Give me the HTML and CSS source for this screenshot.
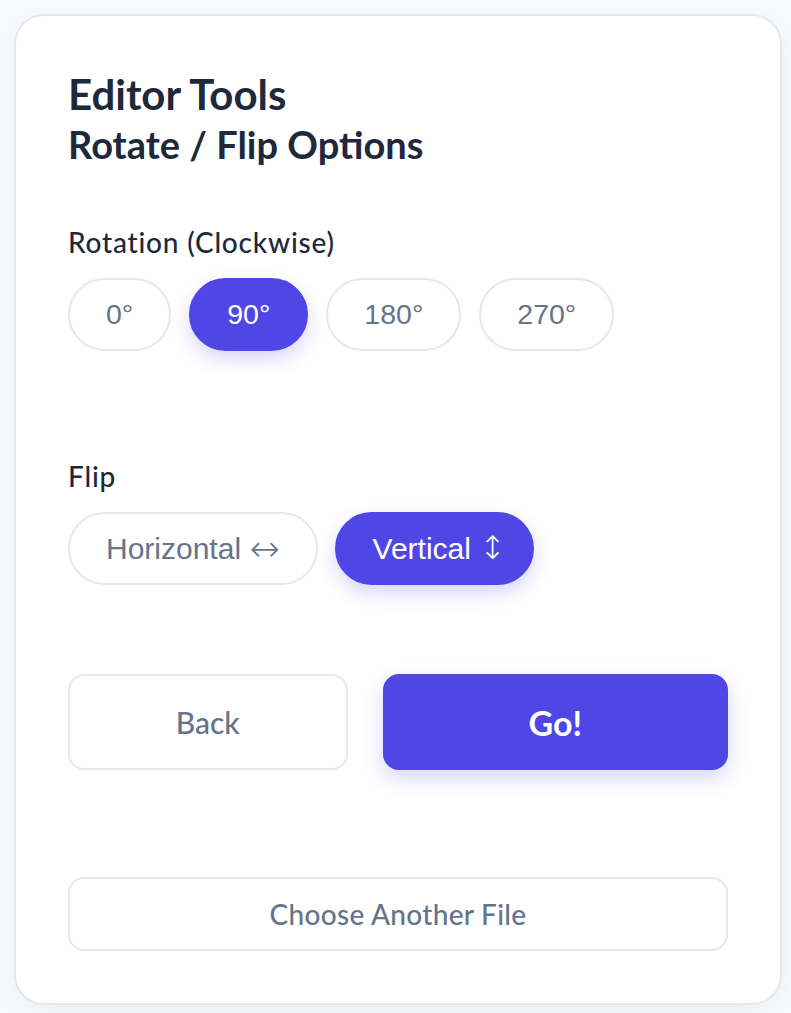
FILE: index.html
```html
<!DOCTYPE html>
<html>
<head>
<meta charset="utf-8">
<link rel="stylesheet" href="styles.css">
</head>
<body>
<div class="page">
  <div class="card">
    <h1 class="title">Editor Tools</h1>
    <h2 class="subtitle">Rotate / Flip Options</h2>

    <div class="section rotation">
      <div class="label">Rotation (Clockwise)</div>
      <div class="pills">
        <button class="pill">0°</button>
        <button class="pill active">90°</button>
        <button class="pill">180°</button>
        <button class="pill">270°</button>
      </div>
    </div>

    <div class="section flip">
      <div class="label">Flip</div>
      <div class="pills">
        <button class="pill wide">Horizontal <span class="arrow arrow-h">↔</span></button>
        <button class="pill wide active">Vertical <span class="arrow arrow-v">↕</span></button>
      </div>
    </div>

    <div class="actions">
      <button class="btn back">Back</button>
      <button class="btn go">Go!</button>
    </div>

    <button class="btn choose">Choose Another File</button>
  </div>
</div>
</body>
</html>
```

FILE: styles.css
```css
* { box-sizing: border-box; }
html, body { margin: 0; padding: 0; }
body {
  background: #f7f9fb;
  font-family: "Lato", "Noto Sans", sans-serif;
  color: #1e293b;
}
.page {
  padding: 14px 9px 8px 14px;
}
.card {
  background: #ffffff;
  border: 2px solid #e2e8f0;
  border-radius: 30px;
  box-shadow: 0 8px 24px rgba(15, 23, 42, 0.04);
  padding: 53px 52px 52px 52px;
  height: 991px;
  display: flex;
  flex-direction: column;
}
.title {
  margin: 0;
  font-size: 42px;
  font-weight: 700;
  line-height: 50px;
  color: #1e293b;
}
.subtitle {
  margin: 0;
  font-size: 38px;
  font-weight: 700;
  line-height: 51px;
  color: #1e293b;
}
.section { display: flex; flex-direction: column; }
.rotation { margin-top: 56px; }
.flip { margin-top: 109px; }
.label {
  font-size: 28px;
  font-weight: 500;
  letter-spacing: 0.8px;
  line-height: 32px;
  color: #1e293b;
  margin-bottom: 20px;
}
.pills {
  display: flex;
  gap: 17px;
  align-items: center;
}
.rotation .pills { gap: 18px; }
.pill {
  font-family: "Liberation Sans", Arial, sans-serif;
  font-size: 28.5px;
  line-height: 33px;
  height: 73px;
  padding: 0 36px;
  border: 2px solid #e2e8f0;
  border-radius: 999px;
  background: #ffffff;
  color: #64748b;
  cursor: pointer;
  display: inline-flex;
  align-items: center;
  white-space: pre;
}
.pill.wide {
  font-size: 30px;
}
.pill.active {
  background: #4f46e5;
  border-color: #4f46e5;
  color: #ffffff;
  box-shadow: 0 8px 18px rgba(79, 70, 229, 0.22);
}
.arrow {
  font-family: "DejaVu Sans", sans-serif;
  font-weight: 200;
  line-height: 33px;
}
.arrow-h { font-size: 36px; }
.arrow-v { font-size: 32px; margin-right: -10px; }
.actions {
  display: flex;
  gap: 35px;
  margin-top: 89px;
}
.btn {
  font-family: "Lato", "Noto Sans", sans-serif;
  border-radius: 16px;
  cursor: pointer;
}
.back {
  flex: 1;
  height: 96px;
  background: #ffffff;
  border: 2px solid #e2e8f0;
  color: #64748b;
  font-size: 30px;
  font-weight: 500;
}
.go {
  flex: 1.25;
  height: 96px;
  background: #4f46e5;
  border: 2px solid #4f46e5;
  color: #ffffff;
  font-size: 34px;
  font-weight: 700;
  box-shadow: 0 8px 20px rgba(79, 70, 229, 0.22);
}
.choose {
  margin-top: 107px;
  height: 75px;
  width: 100%;
  background: #ffffff;
  border: 2px solid #e2e8f0;
  color: #64748b;
  font-size: 28px;
  letter-spacing: 0.3px;
  font-weight: 500;
}
```
